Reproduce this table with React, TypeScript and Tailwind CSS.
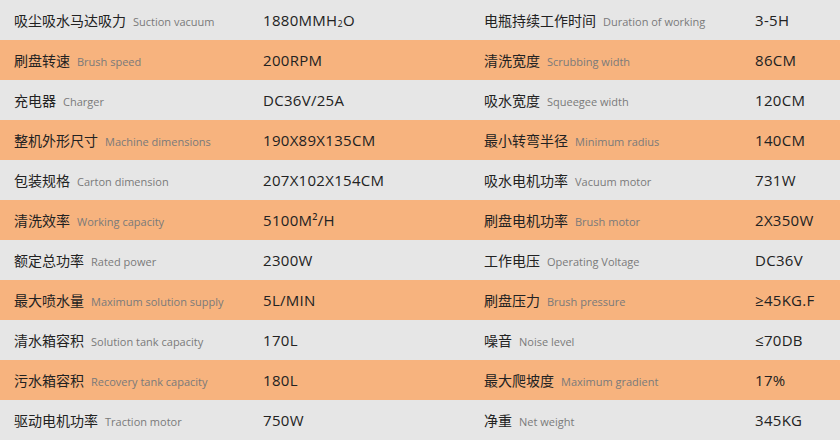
import React from "react";

interface Spec {
  cn: string;
  en: string;
  value: React.ReactNode;
}

const rows: [Spec, Spec][] = [
  [
    {
      cn: "吸尘吸水马达吸力",
      en: "Suction vacuum",
      value: (
        <>
          1880MMH<sub className="text-[9px] relative top-[1px]">2</sub>O
        </>
      ),
    },
    { cn: "电瓶持续工作时间", en: "Duration of working", value: "3-5H" },
  ],
  [
    { cn: "刷盘转速", en: "Brush speed", value: "200RPM" },
    { cn: "清洗宽度", en: "Scrubbing width", value: "86CM" },
  ],
  [
    { cn: "充电器", en: "Charger", value: "DC36V/25A" },
    { cn: "吸水宽度", en: "Squeegee width", value: "120CM" },
  ],
  [
    { cn: "整机外形尺寸", en: "Machine dimensions", value: "190X89X135CM" },
    { cn: "最小转弯半径", en: "Minimum radius", value: "140CM" },
  ],
  [
    { cn: "包装规格", en: "Carton dimension", value: "207X102X154CM" },
    { cn: "吸水电机功率", en: "Vacuum motor", value: "731W" },
  ],
  [
    { cn: "清洗效率", en: "Working capacity", value: "5100M²/H" },
    { cn: "刷盘电机功率", en: "Brush motor", value: "2X350W" },
  ],
  [
    { cn: "额定总功率", en: "Rated power", value: "2300W" },
    { cn: "工作电压", en: "Operating Voltage", value: "DC36V" },
  ],
  [
    { cn: "最大喷水量", en: "Maximum solution supply", value: "5L/MIN" },
    { cn: "刷盘压力", en: "Brush pressure", value: "≥45KG.F" },
  ],
  [
    { cn: "清水箱容积", en: "Solution tank capacity", value: "170L" },
    { cn: "噪音", en: "Noise level", value: "≤70DB" },
  ],
  [
    { cn: "污水箱容积", en: "Recovery tank capacity", value: "180L" },
    { cn: "最大爬坡度", en: "Maximum gradient", value: "17%" },
  ],
  [
    { cn: "驱动电机功率", en: "Traction motor", value: "750W" },
    { cn: "净重", en: "Net weight", value: "345KG" },
  ],
];

function Label({ spec }: { spec: Spec }) {
  return (
    <div className="flex items-baseline whitespace-nowrap">
      <span className="text-[14px] text-[#222]">{spec.cn}</span>
      <span className="ml-[7px] text-[11px] text-[#7a7a7a]">{spec.en}</span>
    </div>
  );
}

export default function App() {
  return (
    <div
      className="w-[840px] h-[440px] overflow-hidden"
      style={{ fontFamily: '"Open Sans", "Noto Sans CJK SC", sans-serif' }}
    >
      {rows.map((row, i) => (
        <div
          key={i}
          className={
            "h-[40px] flex items-center " +
            (i % 2 === 1 ? "bg-[#f7b37e]" : "bg-[#e6e6e6]")
          }
        >
          <div className="w-[263px] pl-[14px]">
            <Label spec={row[0]} />
          </div>
          <div className="w-[221px] text-[15px] tracking-[0.3px] text-[#222]">
            {row[0].value}
          </div>
          <div className="w-[271px]">
            <Label spec={row[1]} />
          </div>
          <div className="flex-1 text-[15px] tracking-[0.3px] text-[#222]">
            {row[1].value}
          </div>
        </div>
      ))}
    </div>
  );
}
